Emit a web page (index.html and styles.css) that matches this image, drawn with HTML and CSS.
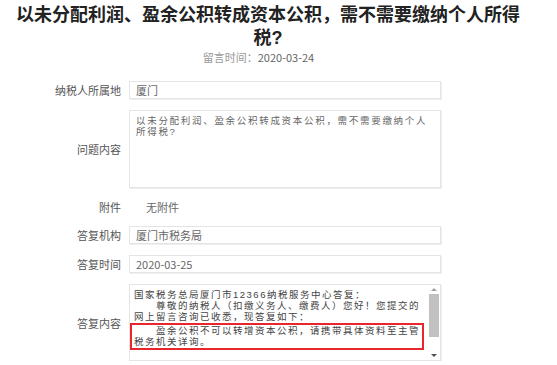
FILE: index.html
```html
<!DOCTYPE html>
<html lang="zh-CN">
<head>
<meta charset="utf-8">
<title>留言详情</title>
<link rel="stylesheet" href="styles.css">
</head>
<body>
<div class="page">
  <h1 class="title">以未分配利润、盈余公积转成资本公积，需不需要缴纳个人所得税?</h1>
  <p class="meta"><span class="meta-label">留言时间：</span>2020-03-24</p>
  <div class="form">
    <div class="label">纳税人所属地</div>
    <div class="field input">厦门</div>

    <div class="label">问题内容</div>
    <div class="field area">以未分配利润、盈余公积转成资本公积，需不需要缴纳个人所得税?</div>

    <div class="label">附件</div>
    <div class="plain">无附件</div>

    <div class="label">答复机构</div>
    <div class="field input">厦门市税务局</div>

    <div class="label">答复时间</div>
    <div class="field input">2020-03-25</div>

    <div class="label">答复内容</div>
    <div class="field answer">
      <div class="answer-body">
        <div class="line">国家税务总局厦门市12366纳税服务中心答复：</div>
        <div class="line">　　尊敬的纳税人（扣缴义务人、缴费人）您好！您提交的</div>
        <div class="line">网上留言咨询已收悉，现答复如下：</div>
        <div class="highlight">
          <div class="line">　　盈余公积不可以转增资本公积，请携带具体资料至主管</div>
          <div class="line">税务机关详询。</div>
        </div>
      </div>
      <div class="scrollbar">
        <span class="arrow up"></span>
        <span class="thumb"></span>
        <span class="track"></span>
        <span class="arrow down"></span>
      </div>
    </div>
  </div>
</div>
</body>
</html>
```
FILE: styles.css
```css
html, body {
  margin: 0;
  padding: 0;
  background: #fff;
}
body {
  font-family: "Noto Sans CJK SC", "Noto Sans", sans-serif;
  color: #555;
}
.page {
  width: 557px;
  padding-top: 4px;
}
.title {
  width: 510px;
  margin: 0 0 0 13px;
  font-family: "Liberation Sans", "Noto Sans CJK SC", sans-serif;
  font-size: 18px;
  line-height: 23px;
  font-weight: bold;
  color: #222;
  text-align: center;
}
.meta {
  width: 517px;
  margin: 0;
  padding-right: 18px;
  font-size: 11px;
  line-height: 14px;
  text-align: center;
  color: #666;
}
.meta-label {
  color: #999;
}
.form {
  margin-top: 17px;
  display: grid;
  grid-template-columns: 121px 312px;
  column-gap: 8px;
  row-gap: 11px;
  align-items: center;
  font-size: 11px;
}
.label {
  text-align: right;
  color: #555;
  line-height: 16px;
}
.field {
  box-sizing: border-box;
  border: 1px solid #e4e4e4;
  box-shadow: 1px 1px 0 #efefef;
  color: #666;
  background: #fff;
}
.input {
  height: 18px;
  line-height: 16px;
  padding: 0 6px;
}
.area {
  height: 78px;
  font-family: "Liberation Sans", "Noto Sans CJK SC", sans-serif;
  font-size: 9.5px;
  letter-spacing: 1.7px;
  line-height: 11px;
  padding: 4px 8px 0 6px;
}
.plain {
  padding-left: 17px;
  line-height: 16px;
  color: #666;
}
.answer {
  height: 77px;
  display: flex;
  color: #444;
}
.answer-body {
  flex: 1;
  padding-top: 3.5px;
  font-family: "Liberation Sans", "Noto Sans CJK SC", sans-serif;
  font-size: 9.5px;
  letter-spacing: 1.5px;
  line-height: 11px;
  overflow: hidden;
}
.line {
  padding-left: 4px;
  white-space: nowrap;
}
.highlight {
  margin: 1.5px 4px 0 0;
  border: 2px solid #e8262b;
  padding: 0 0 1px 0;
}
.highlight .line {
  padding-left: 2px;
}
.scrollbar {
  width: 12px;
  display: flex;
  flex-direction: column;
  align-items: center;
  background: #fff;
}
.arrow {
  width: 0;
  height: 0;
  border-left: 3px solid transparent;
  border-right: 3px solid transparent;
  margin: 3px 0;
}
.arrow.up {
  border-bottom: 3px solid #a3a3a3;
}
.arrow.down {
  border-top: 3px solid #505050;
}
.thumb {
  width: 10px;
  height: 43px;
  background: #c1c1c1;
}
.track {
  flex: 1;
}
```
